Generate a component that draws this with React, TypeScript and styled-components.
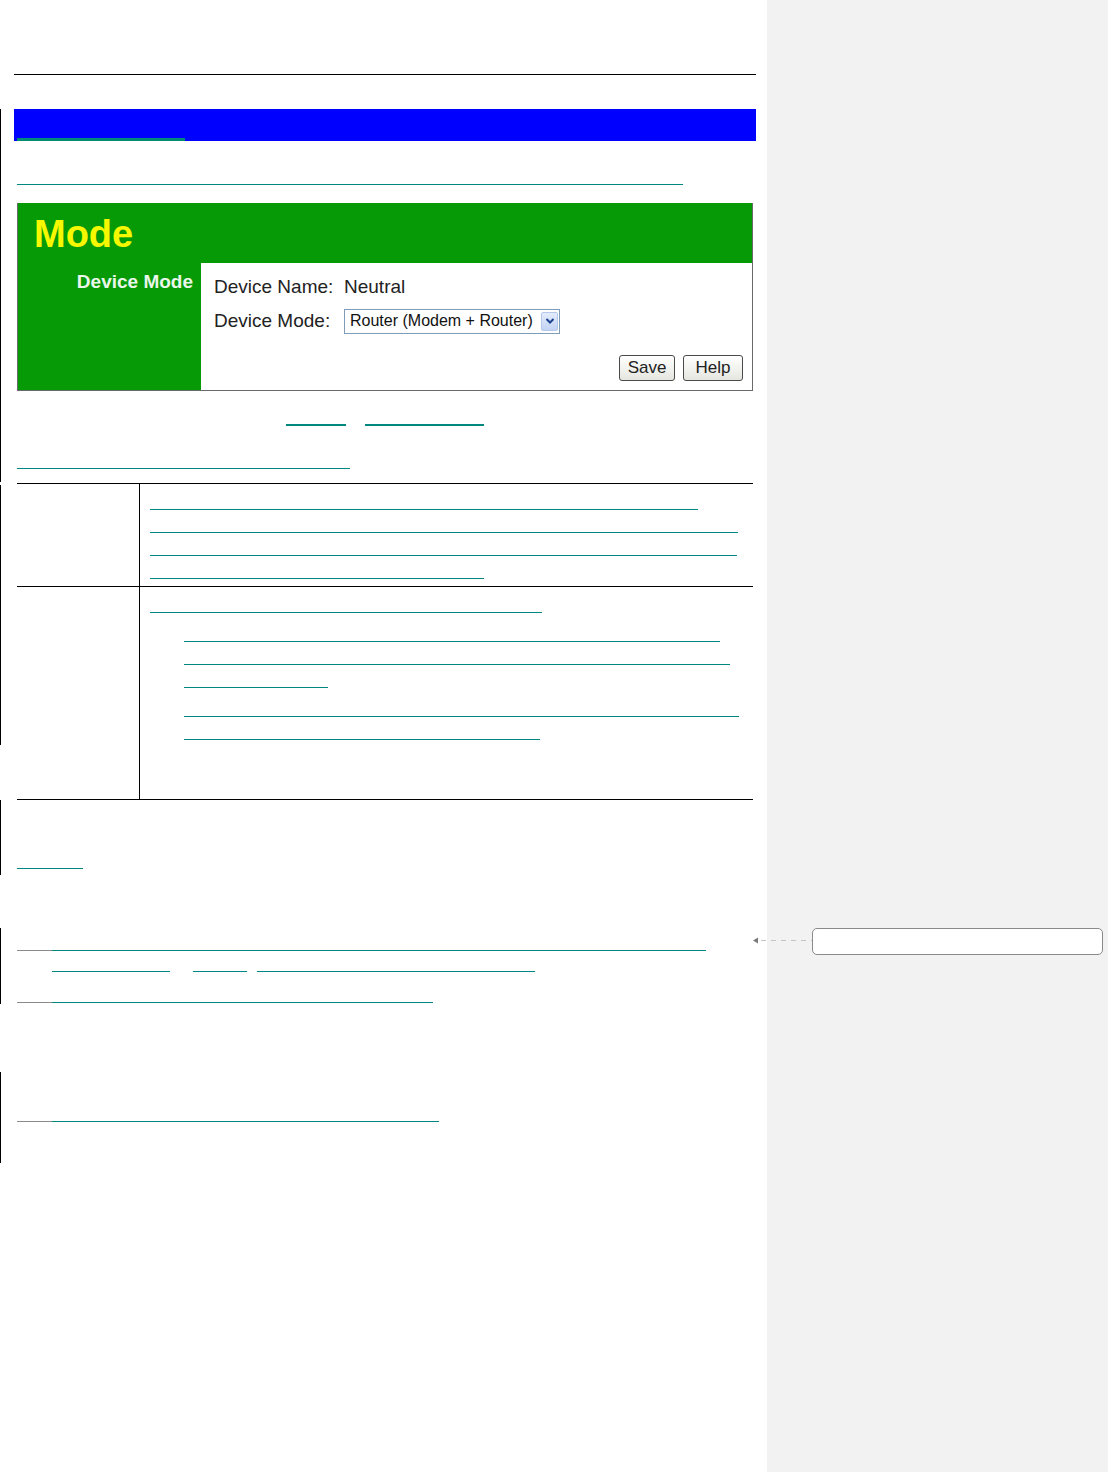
import React from "react";
import styled, { createGlobalStyle } from "styled-components";

const TEAL = "#00877f";
const GRAY = "#8a8a8a";

const GlobalStyle = createGlobalStyle`
  html, body {
    margin: 0;
    padding: 0;
    background: #ffffff;
    font-family: "Liberation Sans", Arial, sans-serif;
  }
`;

const changeBars = [
  [109, 482],
  [485, 745],
  [800, 875],
  [928, 1004],
  [1072, 1163],
];

const Page = () => {
  return (
    <Layout>
      <GlobalStyle />
      <Main>
        {changeBars.map(([from, to]) => (
          <ChangeBar key={from} style={{ top: from, height: to - from }} />
        ))}

        <TopRule />

        <TitleBar>
          <TitleAccent />
        </TitleBar>

        <Line $top={43} $w={666} />

        <Panel>
          <PanelHeader>Mode</PanelHeader>
          <PanelBody>
            <SideLabel>Device Mode</SideLabel>
            <Form>
              <FieldRow>
                <FieldLabel>Device Name:</FieldLabel>
                <FieldValue>Neutral</FieldValue>
              </FieldRow>
              <FieldRow>
                <FieldLabel>Device Mode:</FieldLabel>
                <FakeSelect>
                  <span>Router (Modem + Router)</span>
                  <SelectArrow>
                    <svg width="10" height="8" viewBox="0 0 10 8">
                      <path
                        d="M1.5 2 L5 5.5 L8.5 2"
                        fill="none"
                        stroke="#1d3f8f"
                        strokeWidth="2"
                      />
                    </svg>
                  </SelectArrow>
                </FakeSelect>
              </FieldRow>
              <ButtonRow>
                <Button $w={56}>Save</Button>
                <Button $w={60}>Help</Button>
              </ButtonRow>
            </Form>
          </PanelBody>
        </Panel>

        <Segments $top={33} $indent={269}>
          <Seg $w={60} $thick />
          <Seg $w={119} $gap={19} $thick />
        </Segments>

        <Line $top={42} $w={333} />

        <Table>
          <Row>
            <KeyCell />
            <DescCell>
              <TextLine $w={548} />
              <TextLine $w={588} />
              <TextLine $w={587} />
              <TextLine $w={334} />
            </DescCell>
          </Row>
          <Row>
            <KeyCell />
            <DescCell $bottom={59}>
              <TextLine $w={392} />
              <ListItem>
                <TextLine $w={536} />
                <TextLine $w={546} />
                <TextLine $w={144} />
              </ListItem>
              <ListItem>
                <TextLine $w={555} />
                <TextLine $w={356} />
              </ListItem>
            </DescCell>
          </Row>
        </Table>

        <Line $top={68} $w={66} />

        <Segments $top={81}>
          <Seg $w={35} $gray />
          <Seg $w={654} />
        </Segments>
        <Segments $top={20} $indent={35}>
          <Seg $w={118} />
          <Seg $w={54} $gap={23} />
          <Seg $w={278} $gap={10} />
        </Segments>
        <Segments $top={30}>
          <Seg $w={35} $gray />
          <Seg $w={381} />
        </Segments>

        <Segments $top={118}>
          <Seg $w={35} $gray />
          <Seg $w={387} />
        </Segments>
      </Main>

      <Sidebar>
        <CommentBox />
      </Sidebar>

      <Connector>
        <svg width="59" height="7" viewBox="0 0 59 7">
          <path d="M0 3.5 L5 0.5 L5 6.5 Z" fill="#7a7a7a" />
          <line
            x1="8"
            y1="3.5"
            x2="59"
            y2="3.5"
            stroke="#c4c4c4"
            strokeWidth="1"
            strokeDasharray="5 5"
          />
        </svg>
      </Connector>
    </Layout>
  );
};

const Layout = styled.div`
  position: relative;
  display: flex;
  width: 1108px;
  min-height: 1472px;
`;

const Main = styled.div`
  position: relative;
  width: 767px;
  flex-shrink: 0;
  padding-top: 74px;
  box-sizing: border-box;
`;

const ChangeBar = styled.div`
  position: absolute;
  left: 0;
  width: 1px;
  background: #000;
`;

const TopRule = styled.div`
  margin-left: 14px;
  width: 742px;
  border-top: 1px solid #000;
`;

const TitleBar = styled.div`
  margin: 34px 0 0 14px;
  width: 742px;
  height: 32px;
  background: #0000ff;
  display: flex;
  align-items: flex-end;
`;

const TitleAccent = styled.div`
  margin-left: 3px;
  width: 168px;
  height: 3px;
  background: #008a78;
`;

const Line = styled.div<{ $top: number; $w: number }>`
  margin: ${(p) => p.$top}px 0 0 17px;
  width: ${(p) => p.$w}px;
  height: 1px;
  background: ${TEAL};
`;

const Segments = styled.div<{ $top: number; $indent?: number }>`
  display: flex;
  margin: ${(p) => p.$top}px 0 0 ${(p) => 17 + (p.$indent ?? 0)}px;
`;

const Seg = styled.div<{ $w: number; $gap?: number; $gray?: boolean; $thick?: boolean }>`
  width: ${(p) => p.$w}px;
  margin-left: ${(p) => p.$gap ?? 0}px;
  height: ${(p) => (p.$thick ? 2 : 1)}px;
  background: ${(p) => (p.$gray ? GRAY : TEAL)};
`;

const Panel = styled.div`
  margin: 18px 0 0 17px;
  width: 736px;
  box-sizing: border-box;
  border: 1px solid #6a6a6a;
  border-top: none;
  background: #069a06;
`;

const PanelHeader = styled.div`
  height: 60px;
  padding: 9px 0 0 16px;
  box-sizing: border-box;
  font-size: 38px;
  line-height: 44px;
  font-weight: bold;
  color: #f7f700;
`;

const PanelBody = styled.div`
  display: grid;
  grid-template-columns: 183px 1fr;
`;

const SideLabel = styled.div`
  padding: 8px 8px 0 0;
  text-align: right;
  font-size: 19px;
  line-height: 22px;
  font-weight: bold;
  color: #eaf7ea;
`;

const Form = styled.div`
  background: #ffffff;
  padding: 11px 9px 9px 13px;
  display: flex;
  flex-direction: column;
`;

const FieldRow = styled.div`
  display: flex;
  align-items: center;
  height: 26px;

  & + & {
    margin-top: 8px;
  }
`;

const FieldLabel = styled.div`
  width: 130px;
  font-size: 19px;
  color: #222;
`;

const FieldValue = styled.div`
  font-size: 19px;
  color: #222;
`;

const FakeSelect = styled.div`
  width: 216px;
  height: 25px;
  box-sizing: border-box;
  border: 1px solid #7f9db9;
  display: flex;
  align-items: center;
  justify-content: space-between;
  padding: 0 1px 0 5px;
  font-size: 16px;
  color: #111;
`;

const SelectArrow = styled.div`
  width: 17px;
  height: 19px;
  box-sizing: border-box;
  border: 1px solid #b5c8ec;
  border-radius: 2px;
  background: linear-gradient(#e4ecfb, #c2d3f4);
  display: flex;
  align-items: center;
  justify-content: center;
`;

const ButtonRow = styled.div`
  display: flex;
  justify-content: flex-end;
  gap: 8px;
  margin-top: 21px;
`;

const Button = styled.button<{ $w: number }>`
  width: ${(p) => p.$w}px;
  height: 26px;
  padding: 0;
  border: 1px solid #4a4a4a;
  border-radius: 3px;
  background: linear-gradient(#ffffff, #e6e6e0);
  font-family: "Liberation Sans", Arial, sans-serif;
  font-size: 17px;
  color: #222;
`;

const Table = styled.div`
  margin: 14px 0 0 17px;
  width: 736px;
  border-top: 1px solid #000;
`;

const Row = styled.div`
  display: grid;
  grid-template-columns: 123px 1fr;
  border-bottom: 1px solid #000;
`;

const KeyCell = styled.div`
  border-right: 1px solid #000;
`;

const DescCell = styled.div<{ $bottom?: number }>`
  padding: 3px 0 ${(p) => p.$bottom ?? 7}px 10px;
`;

const TextLine = styled.div<{ $w: number }>`
  width: ${(p) => p.$w}px;
  height: 22px;
  border-bottom: 1px solid ${TEAL};
`;

const ListItem = styled.div`
  margin: 6px 0 0 34px;
`;

const Sidebar = styled.div`
  flex: 1;
  background: #f2f2f2;
  padding-top: 928px;
`;

const CommentBox = styled.div`
  margin-left: 45px;
  width: 291px;
  height: 27px;
  box-sizing: border-box;
  border: 1px solid #8a8a8a;
  border-radius: 5px;
  background: #ffffff;
`;

const Connector = styled.div`
  position: absolute;
  left: 753px;
  top: 937px;
  line-height: 0;
`;

export default Page;
